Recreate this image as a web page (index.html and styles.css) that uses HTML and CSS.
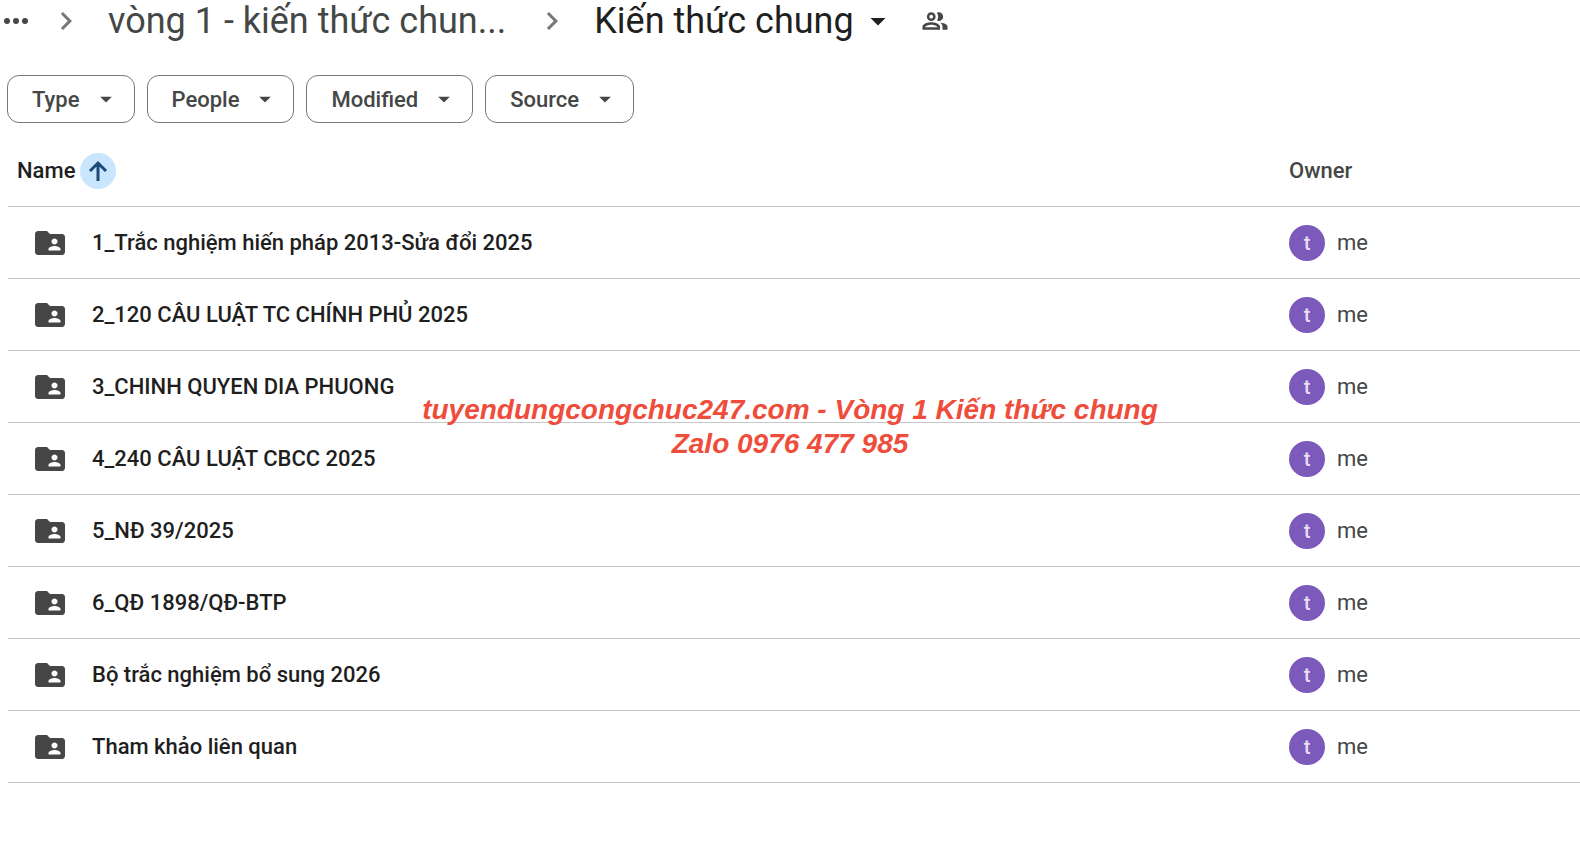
FILE: index.html
```html
<!DOCTYPE html>
<html lang="vi">
<head>
    <meta charset="UTF-8">
    <meta name="viewport" content="width=device-width, initial-scale=1.0">
    <title>Kiến thức chung</title>
    <link rel="stylesheet" href="styles.css">
</head>
<body>

    <!-- shared icons -->
    <svg class="sprite" aria-hidden="true">
        <symbol id="folder" viewBox="0 0 24 24">
            <path d="M20 6h-8l-2-2H4c-1.100 0-1.990.9-1.990 2L2 18c0 1.100.9 2 2 2h16c1.100 0 2-.9 2-2V8c0-1.100-.9-2-2-2zm-5 3c1.100 0 2 .9 2 2s-.9 2-2 2-2-.9-2-2 .9-2 2-2zm4 8h-8v-1c0-1.330 2.670-2 4-2s4 .67 4 2v1z"/>
        </symbol>
        <symbol id="caret" viewBox="0 0 24 24">
            <path d="M7 10l5 5 5-5z"/>
        </symbol>
        <symbol id="chevron" viewBox="0 0 24 24">
            <path d="M10 6L8.590 7.410 13.170 12l-4.580 4.590L10 18l6-6z"/>
        </symbol>
    </svg>

    <nav class="breadcrumb" aria-label="Breadcrumb">
        <button class="more" aria-label="Show path">
            <svg viewBox="0 0 24 6"><circle cx="3" cy="3" r="3"/><circle cx="12" cy="3" r="3"/><circle cx="21" cy="3" r="3"/></svg>
        </button>
        <svg class="chevron"><use href="#chevron"/></svg>
        <a class="crumb" href="#">vòng 1 - kiến thức chun...</a>
        <svg class="chevron"><use href="#chevron"/></svg>
        <button class="current">Kiến thức chung <svg class="title-caret"><use href="#caret"/></svg></button>
        <button class="share" aria-label="Manage access">
            <svg viewBox="0 0 24 24">
                <path d="M9 12c1.930 0 3.500-1.570 3.500-3.500S10.930 5 9 5 5.500 6.570 5.500 8.500 7.070 12 9 12zm0-5c.83 0 1.500.67 1.500 1.500S9.830 10 9 10s-1.500-.67-1.500-1.500S8.170 7 9 7zM9 13c-2.340 0-7 1.170-7 3.500V19h14v-2.500c0-2.330-4.660-3.500-7-3.500zM4 17c0-.84 2.870-2 5-2s5 1.160 5 2H4zM16.040 13.100c1.160.84 1.960 1.960 1.960 3.400V19h4v-2.500c0-2.020-3.500-3.170-5.960-3.400zM15 12c1.930 0 3.500-1.570 3.500-3.500S16.930 5 15 5c-.54 0-1.040.13-1.500.35.63.89 1 1.980 1 3.150s-.37 2.260-1 3.150c.46.22.96.35 1.500.35z"/>
            </svg>
        </button>
    </nav>

    <div class="filters">
        <button class="chip">Type <svg><use href="#caret"/></svg></button>
        <button class="chip">People <svg><use href="#caret"/></svg></button>
        <button class="chip">Modified <svg><use href="#caret"/></svg></button>
        <button class="chip">Source <svg><use href="#caret"/></svg></button>
    </div>

    <table class="files">
        <thead>
            <tr>
                <th class="col-name" scope="col">
                    <div class="sort">
                        Name
                        <button class="sort-btn" aria-label="Reverse sort direction">
                            <svg viewBox="0 0 24 24"><path d="M12 22V4M4 12l8-8 8 8"/></svg>
                        </button>
                    </div>
                </th>
                <th class="col-owner" scope="col">Owner</th>
            </tr>
        </thead>
        <tbody>
            <tr>
                <td><div class="file"><svg><use href="#folder"/></svg>1_Trắc nghiệm hiến pháp 2013-Sửa đổi 2025</div></td>
                <td><div class="owner"><span class="avatar">t</span>me</div></td>
            </tr>
            <tr>
                <td><div class="file"><svg><use href="#folder"/></svg>2_120 CÂU LUẬT TC CHÍNH PHỦ 2025</div></td>
                <td><div class="owner"><span class="avatar">t</span>me</div></td>
            </tr>
            <tr>
                <td><div class="file"><svg><use href="#folder"/></svg>3_CHINH QUYEN DIA PHUONG</div></td>
                <td><div class="owner"><span class="avatar">t</span>me</div></td>
            </tr>
            <tr>
                <td><div class="file"><svg><use href="#folder"/></svg>4_240 CÂU LUẬT CBCC 2025</div></td>
                <td><div class="owner"><span class="avatar">t</span>me</div></td>
            </tr>
            <tr>
                <td><div class="file"><svg><use href="#folder"/></svg>5_NĐ 39/2025</div></td>
                <td><div class="owner"><span class="avatar">t</span>me</div></td>
            </tr>
            <tr>
                <td><div class="file"><svg><use href="#folder"/></svg>6_QĐ 1898/QĐ-BTP</div></td>
                <td><div class="owner"><span class="avatar">t</span>me</div></td>
            </tr>
            <tr>
                <td><div class="file"><svg><use href="#folder"/></svg>Bộ trắc nghiệm bổ sung 2026</div></td>
                <td><div class="owner"><span class="avatar">t</span>me</div></td>
            </tr>
            <tr>
                <td><div class="file"><svg><use href="#folder"/></svg>Tham khảo liên quan</div></td>
                <td><div class="owner"><span class="avatar">t</span>me</div></td>
            </tr>
        </tbody>
    </table>

    <p class="watermark">tuyendungcongchuc247.com - Vòng 1 Kiến thức chung<br>Zalo 0976 477 985</p>

</body>
</html>
```
FILE: styles.css
```css
* {
    box-sizing: border-box;
}
body {
    margin: 0;
    min-height: 100vh;
    position: relative;
    background-color: #fff;
    color: #1f1f1f;
    font-family: Roboto, "Noto Sans", sans-serif;
    font-size: 22px;
}
svg {
    fill: currentColor;
    flex: none;
}
button {
    padding: 0;
    border: none;
    background: none;
    color: inherit;
    font: inherit;
    cursor: pointer;
}
.sprite {
    display: none;
}

/* breadcrumb */
.breadcrumb {
    display: flex;
    align-items: center;
    height: 42px;
    padding-left: 4px;
    font-size: 36px;
    color: #444746;
    white-space: nowrap;
}
.more svg {
    display: block;
    width: 24px;
    height: 6px;
}
.chevron {
    width: 36px;
    height: 36px;
    margin: 0 24px 0 20px;
    color: #747775;
}
.crumb {
    color: inherit;
    text-decoration: none;
}
.crumb + .chevron {
    margin-left: 28px;
}
.current {
    display: flex;
    align-items: center;
    gap: 6px;
    color: #1f1f1f;
}
.title-caret {
    width: 36px;
    height: 36px;
}
.share {
    margin-left: 24px;
}
.share svg {
    display: block;
    width: 30px;
    height: 30px;
}

/* filter chips */
.filters {
    display: flex;
    gap: 12px;
    padding: 33px 7px 0;
}
.chip {
    display: flex;
    align-items: center;
    gap: 12px;
    height: 48px;
    padding: 0 14px 0 24px;
    border: 1px solid #747775;
    border-radius: 12px;
    color: #444746;
    font-weight: 500;
}
.chip svg {
    width: 28px;
    height: 28px;
}

/* file list */
.files {
    width: calc(100% - 8px);
    margin: 12px 0 0 8px;
    border-spacing: 0;
    table-layout: fixed;
}
.files th,
.files td {
    height: 72px;
    padding: 0;
    border-bottom: 1px solid #c7c7c7;
    text-align: left;
    font-weight: 500;
}
.files .col-owner {
    width: 291px;
    color: #444746;
}
.sort {
    display: flex;
    align-items: center;
    gap: 5px;
    padding-left: 9px;
}
.sort-btn {
    display: flex;
    align-items: center;
    justify-content: center;
    width: 36px;
    height: 36px;
    border-radius: 50%;
    background-color: #c9e6fe;
    color: #1d4a77;
}
.sort-btn svg {
    width: 24px;
    height: 24px;
    fill: none;
    stroke: currentColor;
    stroke-width: 3;
}
.file {
    display: flex;
    align-items: center;
    gap: 24px;
    padding-left: 24px;
}
.file svg {
    width: 36px;
    height: 36px;
    color: #444746;
}
.owner {
    display: flex;
    align-items: center;
    gap: 12px;
    color: #444746;
    font-weight: 400;
}
.avatar {
    width: 36px;
    height: 36px;
    border-radius: 50%;
    background-color: #7b5abc;
    color: #e8dff5;
    font-size: 20px;
    font-weight: 500;
    line-height: 36px;
    text-align: center;
}

/* text laid over the list */
.watermark {
    position: absolute;
    top: 50%;
    left: 0;
    right: 0;
    margin: 0;
    padding-top: 4px;
    transform: translateY(-50%);
    color: #ef4d3c;
    font: italic bold 28px/34px "Liberation Sans", Arial, sans-serif;
    text-align: center;
    pointer-events: none;
}
```
